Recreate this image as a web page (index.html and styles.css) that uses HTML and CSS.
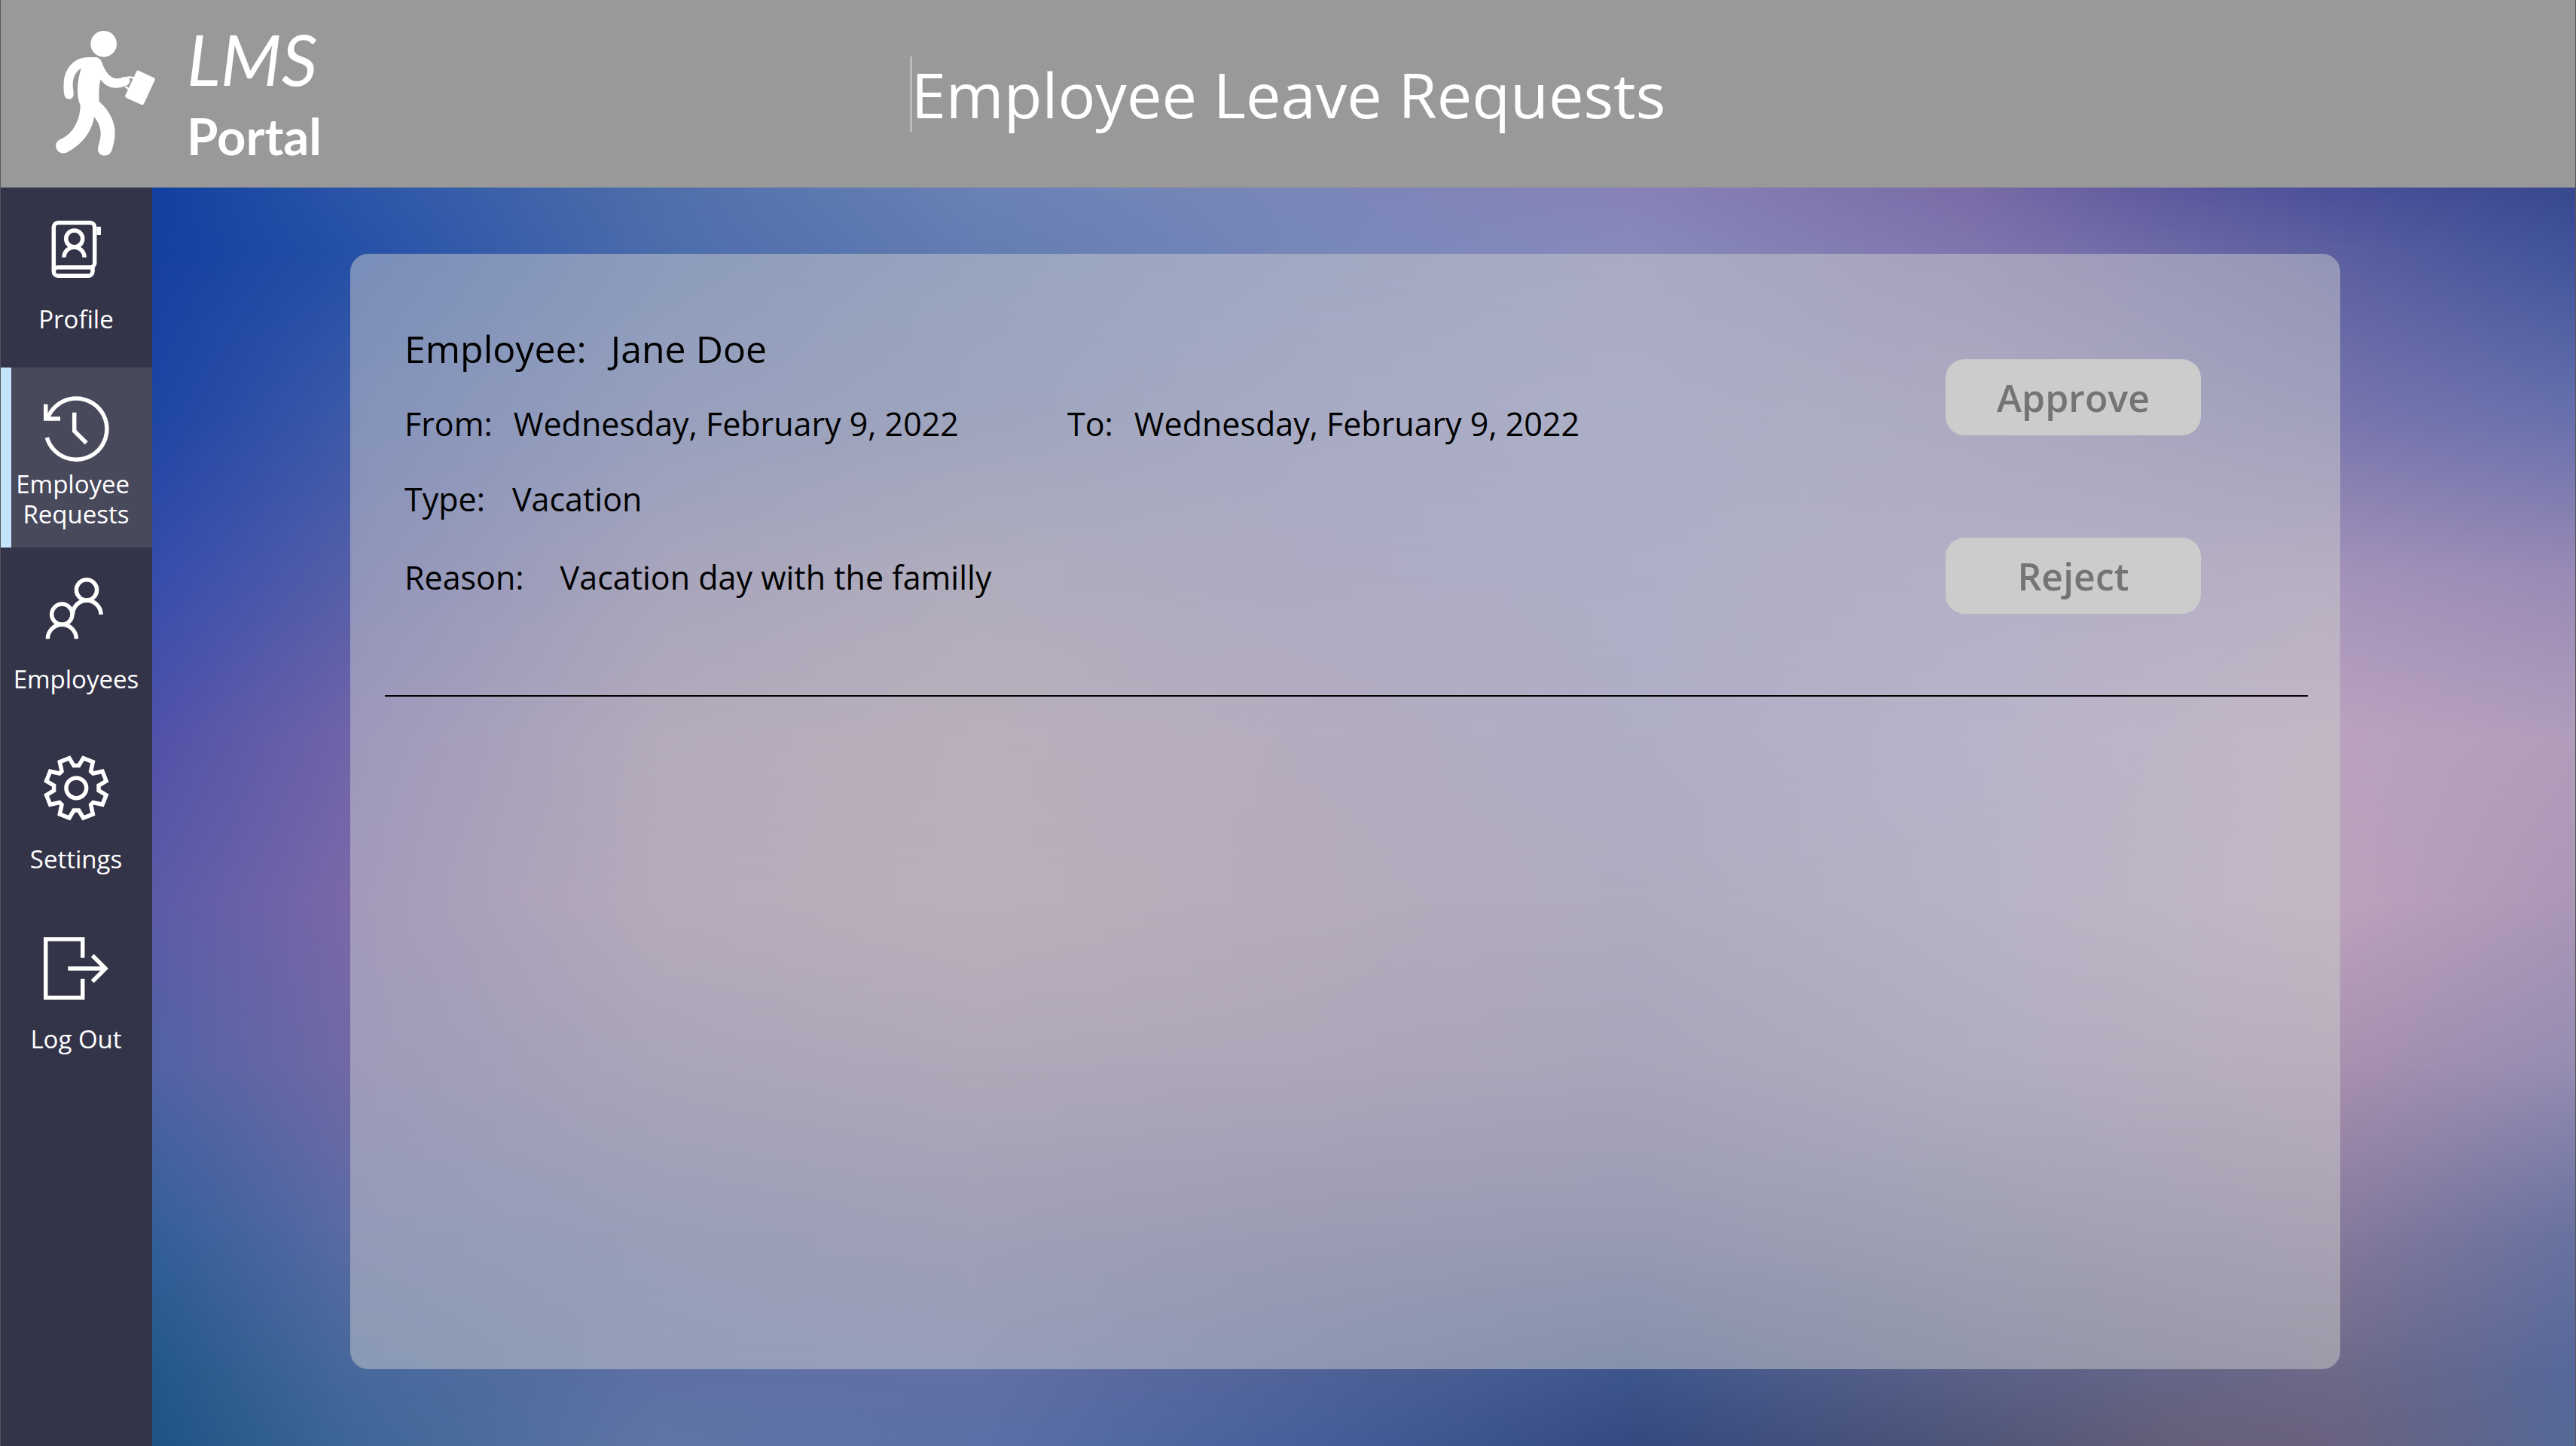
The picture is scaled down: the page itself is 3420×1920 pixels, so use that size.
FILE: index.html
```html
<!DOCTYPE html>
<html lang="en">
<head>
<meta charset="utf-8">
<title>LMS Portal - Employee Leave Requests</title>
<link rel="stylesheet" href="styles.css">
</head>
<body>
<header class="topbar">
  <a class="brand" href="#">
    <svg class="brand-mark" viewBox="210 120 420 510" aria-hidden="true">
      <circle cx="413" cy="175" r="52"/>
      <path d="M350 228H382C397 230 403 240 408 254C420 288 440 312 466 313C480 313 488 306 500 306C512 307 518 316 517 324C516 335 508 340 497 343C480 351 455 353 437 346C421 340 410 328 400 317C394 345 393 372 395 404C432 436 458 482 458 528C458 555 452 580 444 602C431 630 387 624 390 590C397 560 402 545 401 528C400 505 390 485 375 465C370 500 352 536 328 561C308 582 285 598 264 608C240 617 219 598 223 575C226 560 240 554 254 548C290 528 320 480 320 418C312 405 309 380 309 352C310 325 315 300 323 272C300 285 290 310 290 338C290 352 294 366 293 377C291 400 260 400 256 377C253 360 253 345 254 328C258 270 298 228 350 228Z"/>
      <path d="M552 281L613 310Q619 313 617 319L573 413Q570 419 563 417L503 390Q497 386 499 380L543 286Q546 279 552 281Z"/>
      <path class="brand-handle" d="M503 310Q520 304 536 313M499 345L512 354"/>
    </svg>
    <span class="brand-text">
      <span class="brand-name">LMS</span>
      <span class="brand-sub">Portal</span>
    </span>
  </a>
  <h1 class="page-title">Employee Leave Requests</h1>
</header>
<div class="shell">
  <nav class="sidebar">
    <a class="nav-item" href="#">
      <svg class="nav-icon" viewBox="0 0 96 96" aria-hidden="true">
        <path d="M18.3 79V19.7a6 6 0 0 1 6-6H66.7a6 6 0 0 1 6 6V67a6 6 0 0 1-6 6H24a5.6 5.6 0 0 0 0 11.3H64a6 6 0 0 0 6-6V73"/>
        <path d="M78.2 19V30"/>
        <circle cx="45.7" cy="35" r="11"/>
        <path d="M32 59.7a13.5 13.5 0 0 1 27 0"/>
      </svg>
      <span class="nav-label">Profile</span>
    </a>
    <a class="nav-item nav-item-active" href="#" aria-current="page">
      <svg class="nav-icon" viewBox="0 0 96 96" aria-hidden="true">
        <path d="M9.3 60A40.6 40.6 0 1 0 10.8 33"/>
        <path d="M7.7 15.7V35H27"/>
        <path d="M45.7 26.7V51.3L61.7 67.3"/>
      </svg>
      <span class="nav-label">Employee&nbsp;<br>Requests</span>
    </a>
    <a class="nav-item" href="#">
      <svg class="nav-icon" viewBox="0 0 96 96" aria-hidden="true">
        <circle cx="62" cy="23.3" r="13.6"/>
        <path d="M43.4 56a18.8 18.8 0 0 1 37.6 0"/>
        <circle cx="29.3" cy="55.7" r="13.6"/>
        <path d="M10.3 88.3a19 19 0 0 1 38 0"/>
      </svg>
      <span class="nav-label">Employees</span>
    </a>
    <a class="nav-item" href="#">
      <svg class="nav-icon" viewBox="-48.3 -47.3 96 96" aria-hidden="true">
        <circle cx="0" cy="0" r="13.4"/>
        <path d="M3.3-29.7L9.3-39.7L22-34.7L19.3-22.3L22.3-19.3L34.7-22L39.7-9.3L29.7-3.3V3.3L39.7 9.3L34.7 22L22.3 19.3L19.3 22.3L22 34.7L9.3 39.7L3.3 29.7H-3.3L-9.3 39.7L-22 34.7L-19.3 22.3L-22.3 19.3L-34.7 22L-39.7 9.3L-29.7 3.3V-3.3L-39.7-9.3L-34.7-22L-22.3-19.3L-19.3-22.3L-22-34.7L-9.3-39.7L-3.3-29.7Z"/>
      </svg>
      <span class="nav-label">Settings</span>
    </a>
    <a class="nav-item" href="#">
      <svg class="nav-icon" viewBox="0 0 96 96" aria-hidden="true">
        <path d="M56.7 33.7V9H7.7V86.7H56.7V61.7"/>
        <path d="M37.3 48H87"/>
        <path d="M69.7 30.7L87 48L69.7 65.3"/>
      </svg>
      <span class="nav-label">Log Out</span>
    </a>
  </nav>
  <main class="stage">
    <div class="backdrop" aria-hidden="true">
      <div class="band band-1"></div>
      <div class="band band-2"></div>
      <div class="band band-3"></div>
      <div class="band band-4"></div>
      <div class="band band-5"></div>
      <div class="band band-6"></div>
      <div class="band band-7"></div>
      <div class="band band-8"></div>
      <div class="band band-9"></div>
      <div class="band band-10"></div>
    </div>
    <section class="panel">
      <article class="request">
        <dl class="fields">
          <div class="row row-employee">
            <div class="field field-employee"><dt>Employee:</dt><dd>Jane Doe</dd></div>
          </div>
          <div class="row row-dates">
            <div class="field field-date"><dt>From:</dt><dd>Wednesday, February 9, 2022</dd></div>
            <div class="field field-date"><dt>To:</dt><dd>Wednesday, February 9, 2022</dd></div>
          </div>
          <div class="row row-type">
            <div class="field field-type"><dt>Type:</dt><dd>Vacation</dd></div>
          </div>
          <div class="row row-reason">
            <div class="field field-reason"><dt>Reason:</dt><dd>Vacation day with the familly</dd></div>
          </div>
        </dl>
        <div class="actions">
          <button class="action" type="button" disabled>Approve</button>
          <button class="action" type="button" disabled>Reject</button>
        </div>
      </article>
    </section>
  </main>
</div>
</body>
</html>
```

FILE: styles.css
```css
* {
  box-sizing: border-box;
}

body {
  margin: 0;
  min-height: 100vh;
  display: flex;
  flex-direction: column;
  border-left: 1px solid #54545c;
  border-right: 1px solid #54545c;
  font-family: "Open Sans", "Noto Sans", sans-serif;
  color: #000;
}

/* Top bar */
.topbar {
  display: grid;
  grid-template-columns: 1fr auto 1fr;
  align-items: center;
  height: 249px;
  background: #999;
  color: #fff;
}

.brand {
  display: flex;
  align-items: center;
  gap: 38px;
  padding-left: 69px;
  color: inherit;
  text-decoration: none;
  font-family: Lato, sans-serif;
}

.brand-mark {
  width: 140px;
  height: 170px;
  fill: #fff;
}

.brand-handle {
  fill: none;
  stroke: #fff;
  stroke-width: 7;
}

.brand-text {
  display: flex;
  flex-direction: column;
}

.brand-name {
  font-size: 94px;
  font-style: italic;
  line-height: 110px;
}

.brand-sub {
  font-size: 67px;
  font-weight: 700;
  line-height: 94px;
}

.page-title {
  margin: 0;
  border-left: 1px solid #fff;
  font-size: 83px;
  font-weight: 400;
  line-height: 100px;
}

/* Sidebar */
.shell {
  flex: 1;
  display: flex;
}

.sidebar {
  width: 201px;
  flex: none;
  background: #343449;
}

.nav-item {
  display: flex;
  flex-direction: column;
  align-items: center;
  height: 239px;
  padding: 33px 1px 0 0;
  color: #fff;
  text-decoration: none;
  font-size: 33px;
  line-height: 40px;
  text-align: center;
}

.nav-item-active {
  background: #49495c;
  box-shadow: inset 14px 0 #c3e5fb;
}

.nav-icon {
  width: 96px;
  height: 96px;
  fill: none;
  stroke: #fff;
  stroke-width: 5.5;
}

.nav-label {
  margin-top: 26px;
}

.nav-item-active .nav-label {
  margin-top: 6px;
}

/* Colour wash: each band blends down into the next */
.stage {
  flex: 1;
  display: grid;
}

.backdrop,
.panel {
  grid-area: 1 / 1;
}

.backdrop {
  display: grid;
}

.band {
  grid-area: 1 / 1;
}

.band-1 {
  background: linear-gradient(to right, #143fa0, #2a55a8 8%, #4f6fab 21%, #6a82b5 34%, #7b87b9 48%, #8883b7 61%, #7a6ca7 75%, #5e5a9e 83%, #4a509a 90%, #38488f);
}

.band-2 {
  background: linear-gradient(to right, #153fa1, #2450a7 8%, #4c6cac 21%, #647db2 34%, #7787b9 48%, #878abb 61%, #8075ad 75%, #5b5fa0 90%, #40539b);
  mask-image: linear-gradient(to bottom, transparent 0, #000 5%);
}

.band-3 {
  background: linear-gradient(to right, #1e45a4, #3b59a8 8%, rgb(98, 116, 174) 21%, rgb(114, 126, 176) 34%, rgb(132, 138, 188) 48%, rgb(140, 146, 192) 61%, rgb(142, 138, 182) 75%, #7875ad 90%, #6670ac);
  mask-image: linear-gradient(to bottom, transparent 5%, #000 18%);
}

.band-4 {
  background: linear-gradient(to right, #374dac, #545ea8 8%, rgb(132, 126, 172) 21%, rgb(148, 142, 174) 34%, rgb(144, 138, 186) 48%, rgb(144, 146, 194) 61%, rgb(156, 148, 192) 75%, #a493ba 90%, #9a8ab6);
  mask-image: linear-gradient(to bottom, transparent 18%, #000 31%);
}

.band-5 {
  background: linear-gradient(to right, #5052a8, #7064aa 8%, rgb(156, 138, 170) 21%, rgb(168, 146, 172) 34%, rgb(158, 140, 178) 48%, rgb(146, 144, 190) 61%, rgb(164, 155, 198) 75%, #bba3bf 90%, #b19dbb);
  mask-image: linear-gradient(to bottom, transparent 31%, #000 44%);
}

.band-6 {
  background: linear-gradient(to right, #5b5ba8, #7a68a8 8%, rgb(160, 138, 170) 21%, rgb(170, 146, 170) 34%, rgb(158, 138, 170) 48%, rgb(148, 138, 178) 61%, rgb(162, 154, 192) 75%, #bca3bd 90%, #ab96b6);
  mask-image: linear-gradient(to bottom, transparent 44%, #000 57%);
}

.band-7 {
  background: linear-gradient(to right, #5162a5, #7069a5 8%, rgb(136, 126, 166) 21%, rgb(148, 132, 166) 34%, rgb(144, 128, 166) 48%, rgb(134, 126, 168) 61%, rgb(149, 142, 180) 75%, #a890af 90%, #958cb2);
  mask-image: linear-gradient(to bottom, transparent 57%, #000 70%);
}

.band-8 {
  background: linear-gradient(to right, #335f9a, #5a6aa4 8%, rgb(104, 114, 164) 21%, rgb(116, 116, 162) 34%, rgb(108, 108, 156) 48%, rgb(102, 106, 156) 61%, rgb(116, 118, 155) 75%, #877a9d 90%, #6872a0);
  mask-image: linear-gradient(to bottom, transparent 70%, #000 83%);
}

.band-9 {
  background: linear-gradient(to right, #235788, #46689c 8%, rgb(94, 112, 164) 21%, rgb(98, 112, 166) 34%, rgb(80, 98, 152) 48%, rgb(62, 86, 140) 61%, rgb(90, 97, 136) 75%, #6e6988 90%, #56689a);
  mask-image: linear-gradient(to bottom, transparent 83%, #000 94%);
}

.band-10 {
  background: linear-gradient(to right, #1f5284, #3c6696 8%, #6075a5 21%, #5a70a6 34%, #455f9a 48%, #34497f 61%, #4e5578 75%, #665f78 84%, #69617f 90%, #546896);
  mask-image: linear-gradient(to bottom, transparent 94%, #000 100%);
}

/* Request panel */
.panel {
  z-index: 1;
  margin: 88px 312px 102px 263px;
  padding: 0 43px 0 46px;
  border-radius: 24px;
  background: rgba(204, 204, 204, 0.5);
}

.request {
  display: flex;
  justify-content: space-between;
  padding: 92px 142px 108px 26px;
  border-bottom: 2px solid #000;
}

.fields {
  margin: 0;
  font-size: 43px;
  line-height: 60px;
}

.row {
  display: flex;
  gap: 144px;
}

.row-employee {
  font-size: 50px;
  line-height: 68px;
}

.row-dates {
  margin-top: 36px;
}

.row-type {
  margin-top: 40px;
}

.row-reason {
  margin-top: 44px;
}

.field {
  display: flex;
}

.field dd {
  margin: 0;
}

.field-employee {
  gap: 32px;
}

.field-date {
  gap: 28px;
}

.field-type {
  gap: 36px;
}

.field-reason {
  gap: 48px;
}

.actions {
  display: flex;
  flex-direction: column;
  gap: 136px;
  padding-top: 48px;
}

.action {
  width: 339px;
  height: 101px;
  padding: 0;
  border: 0;
  border-radius: 25px;
  background: #ccc;
  color: #747474;
  font-family: inherit;
  font-size: 50px;
  font-weight: 600;
  line-height: 68px;
}
```
